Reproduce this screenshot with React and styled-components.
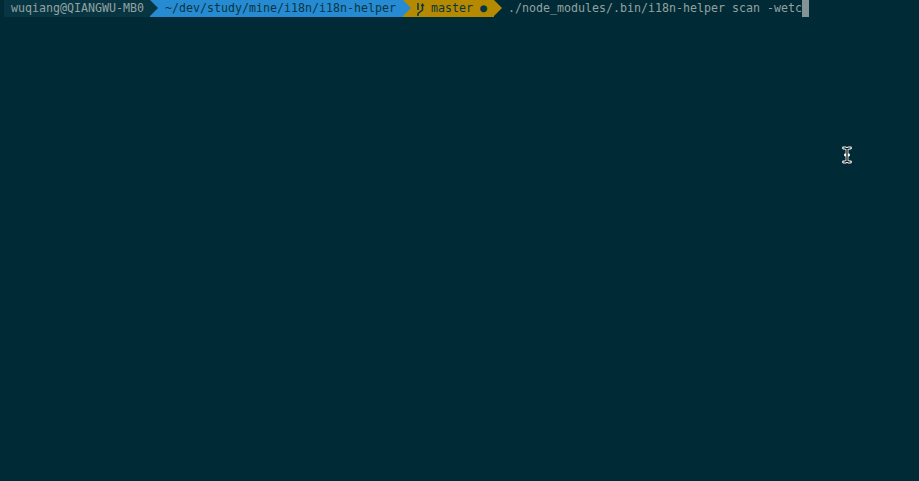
import React from 'react';
import styled, { createGlobalStyle } from 'styled-components';

const GlobalStyle = createGlobalStyle`
  html, body {
    margin: 0;
    height: 100%;
    background: #002b36;
  }
`;

const segments = [
  { text: 'wuqiang@QIANGWU-MB0', bg: '#073642', color: '#93a1a1', start: 7, end: 6 },
  { text: '~/dev/study/mine/i18n/i18n-helper', bg: '#268bd2', color: '#073642', start: 15, end: 7 },
];

const Terminal = () => (
  <Screen>
    <Prompt>
      {segments.map((s) => (
        <Segment key={s.text} $bg={s.bg} $color={s.color} $start={s.start} $end={s.end}>
          {s.text}
        </Segment>
      ))}
      <Segment $bg="#b58900" $color="#073642" $start={13} $end={7}>
        <BranchIcon width="9" height="14" viewBox="0 0 9 14">
          <path d="M2 1v7M6.5 4v4L2 11.5V14" fill="none" stroke="#073642" strokeWidth="1.5" />
          <path d="M4.5 4L6.5 1l2 3z" fill="#073642" />
        </BranchIcon>
        master ●
      </Segment>
      <Command>./node_modules/.bin/i18n-helper scan -wetc</Command>
      <Cursor />
    </Prompt>
    <MouseBeam width="12" height="18" viewBox="0 0 12 18">
      <path
        d="M2.5 2h2L6 3l1.5-1h2M6 3v12M2.5 16h2L6 15l1.5 1h2M4.4 9h3.2"
        fill="none"
        stroke="#fff"
        strokeWidth="2.8"
        strokeLinecap="round"
      />
      <path
        d="M2.5 2h2L6 3l1.5-1h2M6 3v12M2.5 16h2L6 15l1.5 1h2"
        fill="none"
        stroke="#000"
        strokeWidth="1.2"
      />
    </MouseBeam>
  </Screen>
);

export default function App() {
  return (
    <>
      <GlobalStyle />
      <Terminal />
    </>
  );
}

const Screen = styled.div`
  position: relative;
  width: 919px;
  height: 481px;
  overflow: hidden;
  background: #002b36;
  font-family: "DejaVu Sans Mono", "Liberation Mono", monospace;
  font-size: 11.63px;
`;

const Prompt = styled.div`
  display: flex;
  align-items: stretch;
  height: 17px;
  line-height: 17px;
  padding-left: 4px;
  white-space: pre;
`;

const Segment = styled.div`
  position: relative;
  display: flex;
  align-items: center;
  background: ${(p) => p.$bg};
  color: ${(p) => p.$color};
  padding: 0 ${(p) => p.$end}px 0 ${(p) => p.$start}px;

  &::after {
    content: "";
    position: absolute;
    z-index: 1;
    top: 0;
    left: 100%;
    border-style: solid;
    border-width: 8.5px 0 8.5px 8px;
    border-color: transparent transparent transparent ${(p) => p.$bg};
  }
`;

const BranchIcon = styled.svg`
  margin-right: 6px;
  flex-shrink: 0;
`;

const Command = styled.span`
  color: #93a1a1;
  margin-left: 14px;
`;

const Cursor = styled.span`
  width: 7px;
  background: #839496;
`;

const MouseBeam = styled.svg`
  position: absolute;
  left: 841px;
  top: 146px;
`;
